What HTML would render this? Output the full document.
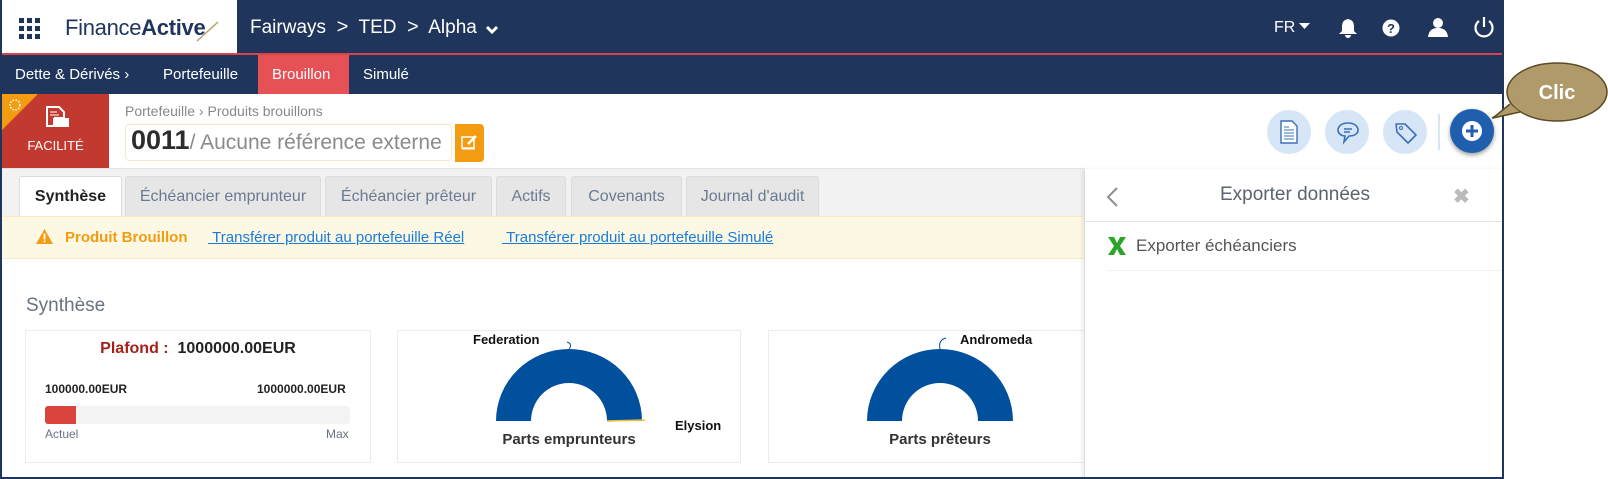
<!DOCTYPE html>
<html><head><meta charset="utf-8"><style>
*{margin:0;padding:0;box-sizing:border-box}
body{width:1608px;height:479px;background:#fff;font-family:"Liberation Sans",sans-serif;position:relative;overflow:hidden}
.a{position:absolute}
.frame{left:0;top:0;width:1504px;height:479px;border:2px solid #1f355c;border-top:none;background:#fff;overflow:hidden}
.nav{color:#fff}
.tab{position:absolute;top:176px;height:40px;background:#e6e6e6;border:1px solid #dcdcdc;border-bottom:none;border-radius:3px 3px 0 0;color:#6b7a90;font-size:16px;line-height:40px;text-align:center}
.rb{position:absolute;top:110px;width:44px;height:44px;border-radius:50%;background:#d6e6f7}
</style></head><body>
<div class="a frame">
 <!-- header -->
 <div class="a" style="left:0;top:0;width:1504px;height:53px;background:#1f355c"></div>
 <div class="a" style="left:0;top:0;width:235px;height:53px;background:#fff"></div>
 <div class="a" style="left:0;top:53px;width:1504px;height:2px;background:#d9444a"></div>
 <svg class="a" style="left:17px;top:18px" width="21" height="21"><g fill="#1f355c"><rect x="0" y="0" width="5" height="5"/><rect x="8" y="0" width="5" height="5"/><rect x="16" y="0" width="5" height="5"/><rect x="0" y="8" width="5" height="5"/><rect x="8" y="8" width="5" height="5"/><rect x="16" y="8" width="5" height="5"/><rect x="0" y="16" width="5" height="5"/><rect x="8" y="16" width="5" height="5"/><rect x="16" y="16" width="5" height="5"/></g></svg>
 <div class="a" style="left:63px;top:15px;font-size:22px;color:#1f355c;letter-spacing:-0.3px">Finance<b style="font-weight:600">Active</b></div>
 <svg class="a" style="left:193px;top:20px" width="25" height="22"><line x1="2" y1="21" x2="23" y2="2" stroke="#b3a06a" stroke-width="1.5"/></svg>
 <div class="a nav" style="left:248px;top:16px;font-size:19px">Fairways &nbsp;<span style="font-size:20px">&gt;</span>&nbsp; TED &nbsp;<span style="font-size:20px">&gt;</span>&nbsp; Alpha</div>
 <svg class="a" style="left:483px;top:25px" width="14" height="10"><path d="M2 2 L7 7 L12 2" stroke="#fff" stroke-width="3" fill="none"/></svg>
 <div class="a nav" style="left:1272px;top:19px;font-size:16px">FR</div>
 <svg class="a" style="left:1297px;top:23px" width="11" height="6"><path d="M0 0 H11 L5.5 6Z" fill="#fff"/></svg>
 <svg class="a" style="left:1336px;top:18px" width="20" height="20"><path d="M10 1 C5 2 4 5 4 9 V13 L1 16 H19 L16 13 V9 C16 5 15 2 10 1Z M7 17 A3 3 0 0 0 13 17Z" fill="#fff"/></svg>
 <svg class="a" style="left:1380px;top:19px" width="18" height="18"><circle cx="9" cy="9" r="8.5" fill="#fff"/><text x="9" y="14" font-size="13" font-weight="bold" text-anchor="middle" fill="#1f355c" font-family="Liberation Sans">?</text></svg>
 <svg class="a" style="left:1426px;top:17px" width="20" height="20"><circle cx="10" cy="6" r="5" fill="#fff"/><path d="M0 20 C1 12 6 11 10 11 C14 11 19 12 20 20Z" fill="#fff"/></svg>
 <svg class="a" style="left:1471px;top:16px" width="22" height="22"><path d="M6 5 A8.5 8.5 0 1 0 16 5" stroke="#fff" stroke-width="2.2" fill="none"/><line x1="11" y1="1" x2="11" y2="11" stroke="#fff" stroke-width="2.2"/></svg>
 <!-- second nav -->
 <div class="a" style="left:0;top:55px;width:1504px;height:39px;background:#1f355c"></div>
 <div class="a" style="left:256px;top:55px;width:91px;height:39px;background:#e65155"></div>
 <div class="a nav" style="left:13px;top:66px;font-size:15px">Dette &amp; Dérivés ›</div>
 <div class="a nav" style="left:161px;top:66px;font-size:15px">Portefeuille</div>
 <div class="a nav" style="left:270px;top:66px;font-size:15px">Brouillon</div>
 <div class="a nav" style="left:361px;top:66px;font-size:15px">Simulé</div>
 <!-- facility row -->
 <div class="a" style="left:0;top:94px;width:107px;height:74px;background:#c2392f"></div>
 <svg class="a" style="left:0;top:94px" width="36" height="36"><path d="M0 0 H36 L0 36Z" fill="#f39c12"/><circle cx="13" cy="11" r="5" stroke="#fff" stroke-width="1.5" stroke-dasharray="1.5 1.5" fill="none"/></svg>
 <svg class="a" style="left:43px;top:106px" width="25" height="26"><path d="M2 1 H14 L19 6 V12 H10 V20 H2Z" fill="none" stroke="#fff" stroke-width="2"/><rect x="8" y="12" width="16" height="9" fill="#fff"/><line x1="5" y1="6" x2="12" y2="6" stroke="#fff"/><line x1="5" y1="9" x2="14" y2="9" stroke="#fff"/></svg>
 <div class="a" style="left:0;top:138px;width:107px;text-align:center;color:#fff;font-size:13px">FACILITÉ</div>
 <div class="a" style="left:123px;top:103px;font-size:14px;color:#888">Portefeuille › Produits brouillons</div>
 <div class="a" style="left:123px;top:124px;width:327px;height:37px;border:1px solid #f6e9c9;border-radius:4px"></div>
 <div class="a" style="left:129px;top:125px;font-size:27px;font-weight:bold;color:#2d2d2d">0011<span style="font-weight:normal;color:#8a8a8a;font-size:21px">/ Aucune référence externe</span></div>
 <div class="a" style="left:453px;top:124px;width:29px;height:38px;background:#f39c12;border-radius:0 4px 4px 0"></div>
 <svg class="a" style="left:459px;top:134px" width="17" height="16"><rect x="1" y="3" width="12" height="11" fill="none" stroke="#fff" stroke-width="1.5"/><path d="M7 10 L15 2" stroke="#fff" stroke-width="2.5"/><line x1="1" y1="15" x2="14" y2="15" stroke="#fff"/></svg>
 <div class="rb" style="left:1265px"></div><div class="rb" style="left:1323px"></div><div class="rb" style="left:1381px"></div>
 <svg class="a" style="left:1277px;top:120px" width="20" height="24"><path d="M2 1 H13 L18 6 V23 H2Z" fill="#fff" stroke="#3d6fb8" stroke-width="1.4"/><g stroke="#3d6fb8"><line x1="5" y1="10" x2="15" y2="10"/><line x1="5" y1="13" x2="15" y2="13"/><line x1="5" y1="16" x2="15" y2="16"/><line x1="5" y1="19" x2="15" y2="19"/><line x1="5" y1="7" x2="10" y2="7"/></g></svg>
 <svg class="a" style="left:1334px;top:121px" width="24" height="24"><path d="M12 2 C6 2 2 5 2 9 C2 13 6 15 9 15 L8 21 L13 15 C18 15 22 13 22 9 C22 5 18 2 12 2Z" fill="none" stroke="#3d6fb8" stroke-width="1.6"/><line x1="8" y1="8" x2="16" y2="8" stroke="#3d6fb8" stroke-width="1.5"/><line x1="8" y1="11" x2="14" y2="11" stroke="#3d6fb8" stroke-width="1.5"/></svg>
 <svg class="a" style="left:1392px;top:121px" width="24" height="24"><path d="M2 3 L3 11 L14 22 L22 14 L11 3Z" fill="none" stroke="#3d6fb8" stroke-width="1.6" stroke-linejoin="round"/><circle cx="7" cy="7" r="1.5" fill="none" stroke="#3d6fb8"/></svg>
 <div class="a" style="left:1436px;top:114px;width:2px;height:36px;background:#d6e6f7"></div>
 <div class="a" style="left:1448px;top:109px;width:44px;height:44px;border-radius:50%;background:#1f5fad;box-shadow:0 2px 5px rgba(0,0,0,.4)"></div>
 <svg class="a" style="left:1459px;top:120px" width="22" height="22"><circle cx="11" cy="11" r="10" fill="#fff"/><path d="M11 5 V17 M5 11 H17" stroke="#1f5fad" stroke-width="3"/></svg>
 <!-- content -->
 <div class="a" style="left:0;top:168px;width:1082px;height:50px;background:#f2f2f2;border-top:1px solid #e2e2e2"></div>
 <div class="tab" style="left:17px;width:103px;background:#fff;color:#222;font-weight:bold">Synthèse</div>
 <div class="tab" style="left:123px;width:196px">Échéancier emprunteur</div>
 <div class="tab" style="left:323px;width:167px">Échéancier prêteur</div>
 <div class="tab" style="left:494px;width:70px">Actifs</div>
 <div class="tab" style="left:569px;width:111px">Covenants</div>
 <div class="tab" style="left:684px;width:133px">Journal d'audit</div>
 <div class="a" style="left:0;top:216px;width:1082px;height:43px;background:#fdf8e4;border-top:1px solid #f6ebc5;border-bottom:1px solid #f6ebc5"></div>
 <svg class="a" style="left:34px;top:229px" width="17" height="15"><path d="M8.5 0 L17 15 H0Z" fill="#f39c12"/><rect x="7.6" y="4.5" width="1.8" height="6" fill="#fff"/><rect x="7.6" y="11.5" width="1.8" height="1.8" fill="#fff"/></svg>
 <div class="a" style="left:63px;top:229px;font-size:15px;font-weight:bold;color:#f39c12">Produit Brouillon</div>
 <div class="a" style="left:206px;top:229px;font-size:15px;color:#1a7cd6;text-decoration:underline">&nbsp;Transférer produit au portefeuille Réel</div>
 <div class="a" style="left:500px;top:229px;font-size:15px;color:#1a7cd6;text-decoration:underline">&nbsp;Transférer produit au portefeuille Simulé</div>
 <div class="a" style="left:24px;top:295px;font-size:19px;color:#6a7281">Synthèse</div>
 <div class="a" style="left:23px;top:330px;width:346px;height:133px;border:1px solid #ececec"></div>
 <div class="a" style="left:23px;top:340px;width:346px;text-align:center;font-size:16px;font-weight:bold;color:#222"><span style="color:#a3231b">Plafond :</span>&nbsp; 1000000.00EUR</div>
 <div class="a" style="left:43px;top:382px;font-size:12px;font-weight:bold;color:#222">100000.00EUR</div>
 <div class="a" style="left:255px;top:382px;font-size:12px;font-weight:bold;color:#222">1000000.00EUR</div>
 <div class="a" style="left:43px;top:406px;width:305px;height:18px;background:#f3f3f3;border-radius:3px"></div>
 <div class="a" style="left:43px;top:406px;width:31px;height:18px;background:#d9453d;border-radius:3px 0 0 3px"></div>
 <div class="a" style="left:43px;top:427px;font-size:12px;color:#6a7281">Actuel</div>
 <div class="a" style="left:324px;top:427px;font-size:12px;color:#6a7281">Max</div>
 <div class="a" style="left:395px;top:330px;width:344px;height:133px;border:1px solid #ececec"></div>
 <svg class="a" style="left:395px;top:330px" width="344" height="133"><path d="M99 91 A73 72 0 0 1 245 91 H210 A38 38 0 0 0 134 91Z" fill="#00509e"/><line x1="210" y1="91" x2="248" y2="90" stroke="#f0c030" stroke-width="1.5"/><path d="M170 12 Q176 14 172 19" stroke="#00509e" fill="none"/><text x="76" y="14" font-size="13" font-weight="bold" fill="#111">Federation</text><text x="278" y="100" font-size="13" font-weight="bold" fill="#111">Elysion</text><text x="172" y="114" font-size="15" font-weight="bold" fill="#333" text-anchor="middle">Parts emprunteurs</text></svg>
 <div class="a" style="left:766px;top:330px;width:330px;height:133px;border:1px solid #ececec"></div>
 <svg class="a" style="left:766px;top:330px" width="330" height="133"><path d="M99 91 A73 72 0 0 1 245 91 H210 A38 38 0 0 0 134 91Z" fill="#00509e"/><path d="M172 19 Q170 10 178 8" stroke="#00509e" fill="none"/><text x="192" y="14" font-size="13" font-weight="bold" fill="#111">Andromeda</text><text x="172" y="114" font-size="15" font-weight="bold" fill="#333" text-anchor="middle">Parts prêteurs</text></svg>
 <!-- right panel -->
 <div class="a" style="left:1082px;top:169px;width:422px;height:310px;background:#fff;border-left:1px solid #ddd;box-shadow:-2px 0 4px rgba(0,0,0,.08)"></div>
 <div class="a" style="left:1082px;top:221px;width:422px;height:1px;background:#e2e2e2"></div>
 <svg class="a" style="left:1103px;top:186px" width="14" height="22"><path d="M12 2 L3 11 L12 20" stroke="#8a8f98" stroke-width="2" fill="none"/></svg>
 <div class="a" style="left:1082px;top:184px;width:422px;text-align:center;font-size:19px;color:#5b6270">Exporter données</div>
 <div class="a" style="left:1451px;top:184px;font-size:20px;color:#bbb;font-weight:bold">✖</div>
 <svg class="a" style="left:1105px;top:236px" width="20" height="20"><path d="M1 1 H7 L10 7 L13 1 H19 L13 10 L19 19 H13 L10 13 L7 19 H1 L7 10Z" fill="#2aa52a"/></svg>
 <div class="a" style="left:1134px;top:236px;font-size:17px;color:#555">Exporter échéanciers</div>
 <div class="a" style="left:1105px;top:270px;width:399px;height:1px;background:#efefef"></div>
</div>
<!-- callout -->
<svg class="a" style="left:1480px;top:58px" width="128" height="72"><path d="M26 52 L12 60 L35 50Z" fill="#b09a6a" stroke="#5a4a26" stroke-width="1.5"/><ellipse cx="77" cy="34" rx="50" ry="29" fill="#b09a6a" stroke="#5a4a26" stroke-width="1.5"/><path d="M30 46 L13 60 L40 54" fill="#b09a6a" stroke="#5a4a26" stroke-width="1.5" stroke-linejoin="round"/><ellipse cx="77" cy="34" rx="49" ry="28" fill="#b09a6a"/><text x="77" y="41" font-size="20" font-weight="bold" fill="#fff" text-anchor="middle" font-family="Liberation Sans">Clic</text></svg>
</body></html>
